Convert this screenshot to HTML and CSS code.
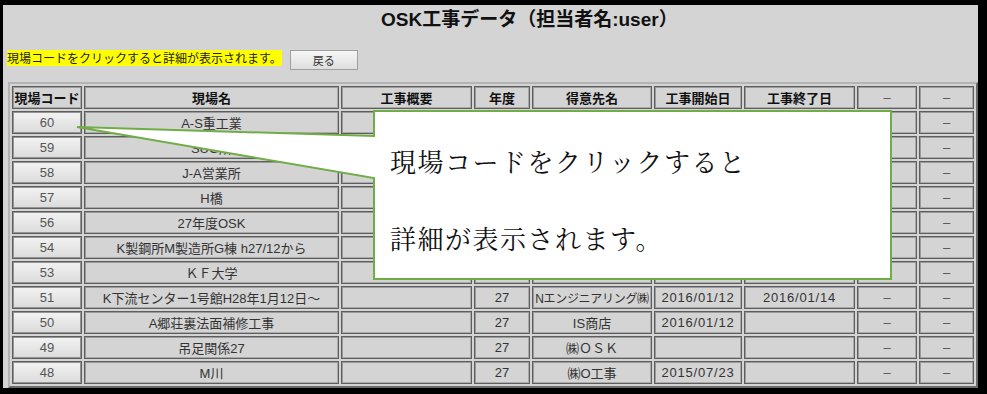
FILE: index.html
```html
<!DOCTYPE html>
<html lang="ja">
<head>
<meta charset="utf-8">
<title>OSK工事データ</title>
<link rel="stylesheet" href="styles.css">
</head>
<body>
<div class="window">
  <h1 class="title">OSK工事データ（担当者名:user）</h1>
  <div class="toolbar">
    <span class="hint">現場コードをクリックすると詳細が表示されます。</span>
    <button class="back" type="button">戻る</button>
  </div>
  <table class="grid">
    <thead>
      <tr>
        <th class="w1">現場コード</th>
        <th class="w2">現場名</th>
        <th class="w3">工事概要</th>
        <th class="w4">年度</th>
        <th class="w5">得意先名</th>
        <th class="w6">工事開始日</th>
        <th class="w7">工事終了日</th>
        <th class="w8 dash">–</th>
        <th class="w9 dash">–</th>
      </tr>
    </thead>
    <tbody>
      <tr><td class="code"><button type="button">60</button></td><td>A-S重工業</td><td></td><td></td><td></td><td></td><td></td><td></td><td class="dash">–</td></tr>
      <tr><td class="code"><button type="button">59</button></td><td>SUG所</td><td></td><td></td><td></td><td></td><td></td><td></td><td class="dash">–</td></tr>
      <tr><td class="code"><button type="button">58</button></td><td>J-A営業所</td><td></td><td></td><td></td><td></td><td></td><td></td><td class="dash">–</td></tr>
      <tr><td class="code"><button type="button">57</button></td><td>H橋</td><td></td><td></td><td></td><td></td><td></td><td></td><td class="dash">–</td></tr>
      <tr><td class="code"><button type="button">56</button></td><td>27年度OSK</td><td></td><td></td><td></td><td></td><td></td><td></td><td class="dash">–</td></tr>
      <tr><td class="code"><button type="button">54</button></td><td>K製鋼所M製造所G棟 h27/12から</td><td></td><td></td><td></td><td></td><td></td><td></td><td class="dash">–</td></tr>
      <tr><td class="code"><button type="button">53</button></td><td>ＫＦ大学</td><td></td><td></td><td></td><td></td><td></td><td></td><td class="dash">–</td></tr>
      <tr><td class="code"><button type="button">51</button></td><td>K下流センター1号館H28年1月12日～</td><td></td><td>27</td><td class="narrow">Nエンジニアリング㈱</td><td class="date">2016/01/12</td><td class="date">2016/01/14</td><td class="dash">–</td><td class="dash">–</td></tr>
      <tr><td class="code"><button type="button">50</button></td><td>A郷荘裏法面補修工事</td><td></td><td>27</td><td>IS商店</td><td class="date">2016/01/12</td><td></td><td class="dash">–</td><td class="dash">–</td></tr>
      <tr><td class="code"><button type="button">49</button></td><td>吊足関係27</td><td></td><td>27</td><td>㈱ＯＳＫ</td><td></td><td></td><td class="dash">–</td><td class="dash">–</td></tr>
      <tr><td class="code"><button type="button">48</button></td><td>M川</td><td></td><td>27</td><td>㈱O工事</td><td class="date">2015/07/23</td><td></td><td class="dash">–</td><td class="dash">–</td></tr>
    </tbody>
  </table>
  <svg class="callout-shape" width="975" height="383" viewBox="0 0 975 383">
    <path d="M371 106 H888 V274 H371 V173 L74 122 L371 131 Z" fill="#ffffff" stroke="#70ad47" stroke-width="2"/>
  </svg>
  <div class="callout-text">
    <p>現場コードをクリックすると</p>
    <p>詳細が表示されます。</p>
  </div>
</div>
</body>
</html>
```

FILE: styles.css
```css
html, body {
  margin: 0;
  padding: 0;
}
body {
  background: #000;
  width: 987px;
  height: 394px;
  overflow: hidden;
}
.window {
  position: relative;
  margin: 5px 0 0 3px;
  width: 975px;
  height: 383px;
  background: #d4d4d4;
  overflow: hidden;
  font-family: "Liberation Sans", "Noto Sans CJK JP", sans-serif;
  color: #333;
}
.title {
  margin: 3px 0 0 378px;
  font-size: 19px;
  line-height: 24px;
  font-weight: bold;
  color: #111;
}
.toolbar {
  display: flex;
  align-items: flex-start;
  gap: 8px;
  margin: 18px 0 0 4px;
}
.hint {
  background: #ffff00;
  font-family: "Noto Sans CJK JP", sans-serif;
  font-size: 12px;
  line-height: 16px;
  color: #222;
}
.back {
  width: 68px;
  height: 20px;
  padding: 0;
  border: 1px solid #a0a0a0;
  background: linear-gradient(#f6f6f6, #dedede);
  font-family: "Noto Sans CJK JP", sans-serif;
  font-size: 11px;
  color: #333;
}
.grid {
  margin: 12px 0 0 5px;
  width: 970px;
  table-layout: fixed;
  border-collapse: separate;
  border-spacing: 2px;
  border: 2px solid;
  border-color: #b4b4b4 #6a6a6a #6a6a6a #b4b4b4;
}
.grid th, .grid td {
  box-sizing: border-box;
  height: 23px;
  padding: 0;
  border: 1px solid #5e5e5e;
  box-shadow: inset 1px 1px 0 #9a9a9a, inset -1px -1px 0 #aaaaaa;
  text-align: center;
  font-size: 13px;
  white-space: nowrap;
  overflow: hidden;
  background: #d4d4d4;
}
.grid th {
  font-weight: bold;
  color: #111;
}
.grid td {
  color: #333;
}
.w1 { width: 70px; }
.w2 { width: 255px; }
.w3 { width: 131px; }
.w4 { width: 56px; }
.w5 { width: 120px; }
.w6 { width: 88px; }
.w7 { width: 111px; }
.w8 { width: 60px; }
.w9 { width: 55px; }
.grid .dash {
  font-weight: normal;
  color: #555;
}
.grid .date {
  letter-spacing: 0.8px;
}
.grid .narrow {
  font-size: 12px;
  letter-spacing: -0.3px;
}
.grid td.code {
  box-shadow: none;
}
.code button {
  display: block;
  width: 100%;
  height: 21px;
  margin: 0;
  padding: 0;
  border: 1px solid #949494;
  background: linear-gradient(#f2f2f2, #dcdcdc);
  font-family: "Liberation Sans", sans-serif;
  font-size: 13px;
  color: #555;
}
.callout-shape {
  position: absolute;
  top: 0;
  left: 0;
}
.callout-text {
  position: absolute;
  left: 371px;
  top: 106px;
  width: 517px;
  height: 168px;
  box-sizing: border-box;
  padding: 11px 0 0 16px;
  font-family: "Noto Serif CJK JP", "Liberation Serif", "Noto Sans CJK JP", serif;
  font-size: 26px;
  letter-spacing: 1.5px;
  color: #111;
}
.callout-text p {
  margin: 0;
  line-height: 77px;
}
```
